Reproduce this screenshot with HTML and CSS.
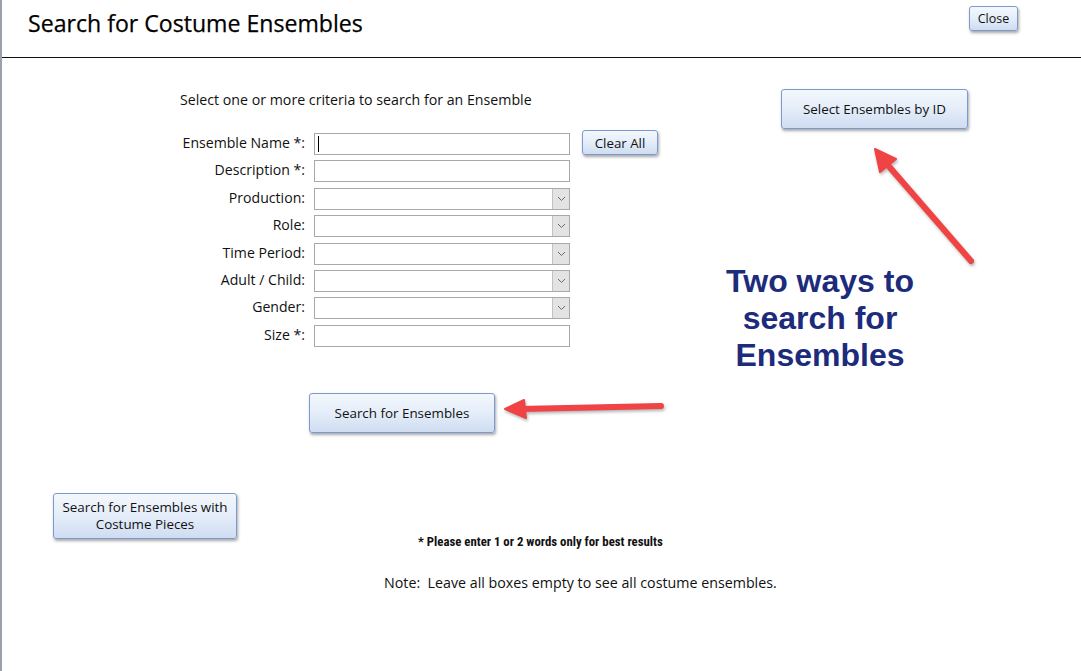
FILE: index.html
```html
<!DOCTYPE html>
<html>
<head>
<meta charset="utf-8">
<link rel="stylesheet" href="styles.css">
</head>
<body>
<div class="window">
  <header class="titlebar">
    <h1 class="title">Search for Costume Ensembles</h1>
    <button class="btn btn-close">Close</button>
  </header>
  <main class="content">
    <div class="top-row">
      <section class="criteria">
        <p class="intro">Select one or more criteria to search for an Ensemble</p>
        <div class="form-grid">
          <label class="lbl">Ensemble Name *:</label>
          <div class="field text-field"><span class="caret"></span></div>
          <button class="btn btn-clear">Clear All</button>

          <label class="lbl">Description *:</label>
          <div class="field text-field"></div>
          <span></span>

          <label class="lbl">Production:</label>
          <div class="field combo"><span class="drop"><svg width="9" height="6" viewBox="0 0 9 6"><path d="M1 1l3.5 3.5L8 1" fill="none" stroke="#6b6b6b" stroke-width="1"/></svg></span></div>
          <span></span>

          <label class="lbl">Role:</label>
          <div class="field combo"><span class="drop"><svg width="9" height="6" viewBox="0 0 9 6"><path d="M1 1l3.5 3.5L8 1" fill="none" stroke="#6b6b6b" stroke-width="1"/></svg></span></div>
          <span></span>

          <label class="lbl">Time Period:</label>
          <div class="field combo"><span class="drop"><svg width="9" height="6" viewBox="0 0 9 6"><path d="M1 1l3.5 3.5L8 1" fill="none" stroke="#6b6b6b" stroke-width="1"/></svg></span></div>
          <span></span>

          <label class="lbl">Adult / Child:</label>
          <div class="field combo"><span class="drop"><svg width="9" height="6" viewBox="0 0 9 6"><path d="M1 1l3.5 3.5L8 1" fill="none" stroke="#6b6b6b" stroke-width="1"/></svg></span></div>
          <span></span>

          <label class="lbl">Gender:</label>
          <div class="field combo"><span class="drop"><svg width="9" height="6" viewBox="0 0 9 6"><path d="M1 1l3.5 3.5L8 1" fill="none" stroke="#6b6b6b" stroke-width="1"/></svg></span></div>
          <span></span>

          <label class="lbl">Size *:</label>
          <div class="field text-field"></div>
          <span></span>
        </div>
        <button class="btn btn-search">Search for Ensembles</button>
      </section>
      <button class="btn btn-byid">Select Ensembles by ID</button>
    </div>
    <div class="bottom-row">
      <button class="btn btn-pieces">Search for Ensembles with<br>Costume Pieces</button>
      <p class="hint">* Please enter 1 or 2 words only for best results</p>
    </div>
    <p class="note">Note:&nbsp; Leave all boxes empty to see all costume ensembles.</p>
  </main>

  <div class="callout">Two ways to<br>search for<br>Ensembles</div>
  <svg class="arrows" width="1081" height="671" viewBox="0 0 1081 671">
    <g fill="#f04343" stroke="#f04343" stroke-linecap="round" stroke-linejoin="round">
      <line x1="971" y1="261" x2="886" y2="163" stroke-width="6"/>
      <polygon points="875,149 896,159 880,172" stroke-width="2"/>
      <line x1="661" y1="406" x2="520" y2="409" stroke-width="6"/>
      <polygon points="505,409 524,400 526,418" stroke-width="2"/>
    </g>
  </svg>
</div>
</body>
</html>
```
FILE: styles.css
```css
* { box-sizing: border-box; }
html, body { margin: 0; padding: 0; background: #fff; }
body {
  font-family: "Open Sans", "Noto Sans", sans-serif;
  color: #111;
  width: 1081px;
  height: 671px;
  overflow: hidden;
}
.window {
  position: relative;
  width: 1081px;
  height: 671px;
  border-left: 2px solid #9ba1ab;
}
.titlebar {
  height: 58px;
  border-bottom: 1px solid #111;
  display: flex;
  align-items: flex-start;
  justify-content: space-between;
}
.title {
  margin: 8px 0 0 26px;
  font-size: 23.1px;
  font-weight: 400;
  line-height: 30px;
  color: #000;
  -webkit-text-stroke: 0.25px #000;
}
.btn {
  font-family: "Open Sans", "Noto Sans", sans-serif;
  font-size: 13px;
  color: #111;
  background: linear-gradient(to bottom, #f4f8fd 0%, #e4edf9 50%, #cfdcf1 100%);
  border: 1px solid #7b9bd0;
  border-radius: 3px;
  box-shadow: 1px 2px 3px rgba(60, 60, 60, 0.45);
  padding: 0;
  cursor: default;
}
.btn-close {
  width: 49px;
  height: 25px;
  margin: 6px 63px 0 0;
  font-size: 12.5px;
}
.content {
  display: flex;
  flex-direction: column;
}
.top-row {
  display: flex;
  align-items: flex-start;
}
.criteria {
  margin-left: 178px;
  display: flex;
  flex-direction: column;
  align-items: flex-start;
}
.intro {
  margin: 32px 0 0 0;
  font-size: 14.2px;
  line-height: 20px;
}
.form-grid {
  margin-top: 23px;
  display: grid;
  grid-template-columns: 125px 256px 76px;
  grid-auto-rows: 22px;
  column-gap: 9px;
  row-gap: 5.4px;
}
.form-grid > .btn-clear { margin-left: 3px; }
.lbl {
  text-align: right;
  font-size: 14.1px;
  line-height: 20px;
  white-space: nowrap;
}
.field {
  position: relative;
  border: 1px solid #a9a9a9;
  background: #fff;
  height: 22px;
}
.caret {
  position: absolute;
  left: 3px;
  top: 2px;
  width: 1px;
  height: 16px;
  background: #000;
}
.combo { display: flex; justify-content: flex-end; }
.drop {
  width: 17px;
  height: 20px;
  background: #e3e3e3;
  border-left: 1px solid #c2c2c2;
  display: flex;
  align-items: center;
  justify-content: center;
}
.btn-clear {
  width: 76px;
  height: 25px;
  margin-top: -3px;
  font-size: 13.3px;
}
.btn-search {
  margin: 46px 0 0 129px;
  width: 186px;
  height: 40px;
  font-size: 13.4px;
}
.btn-byid {
  margin: 31px 0 0 126px;
  width: 187px;
  height: 40px;
  font-size: 13.4px;
}
.bottom-row {
  display: flex;
  align-items: flex-end;
  margin-top: 60px;
}
.btn-pieces {
  margin-left: 51px;
  width: 184px;
  height: 46px;
  line-height: 17px;
  font-size: 13.4px;
}
.hint {
  margin: 0 0 -10px 181px;
  font-family: "Liberation Sans Narrow", "Roboto Condensed", "Open Sans", sans-serif;
  font-size: 12.8px;
  line-height: 14px;
  font-weight: 700;
  letter-spacing: 0;
}
.note {
  margin: 35px 0 0 382px;
  font-size: 14.25px;
  line-height: 18px;
}
.callout {
  position: absolute;
  left: 700px;
  top: 263px;
  width: 236px;
  text-align: center;
  font-family: "Liberation Sans", Arial, sans-serif;
  font-weight: 700;
  font-size: 32px;
  line-height: 37px;
  color: #1d2b7c;
}
.arrows {
  position: absolute;
  left: -2px;
  top: 0;
  pointer-events: none;
  filter: drop-shadow(1px 2px 1.5px rgba(90, 90, 90, 0.45));
}
```
